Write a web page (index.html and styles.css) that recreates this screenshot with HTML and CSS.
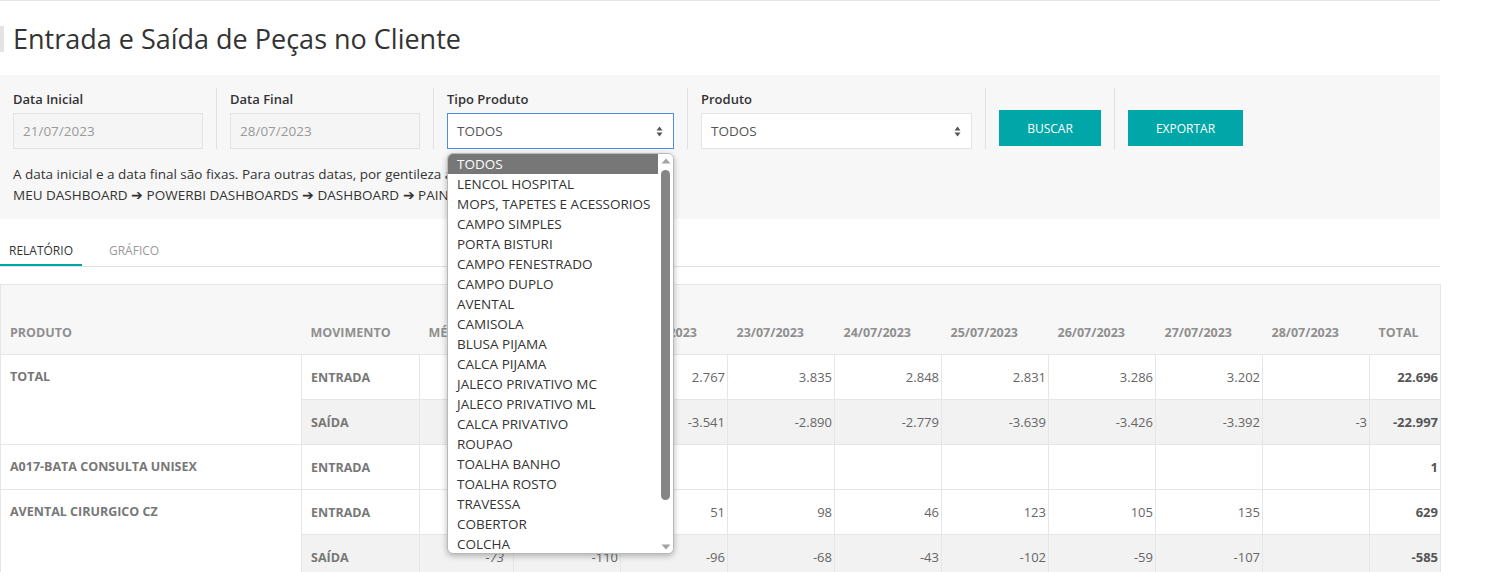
FILE: index.html
```html
<!DOCTYPE html>
<html lang="pt-BR">
<head>
<meta charset="utf-8">
<title>Entrada e Saída de Peças no Cliente</title>
<link rel="stylesheet" href="styles.css">
</head>
<body>
<div class="page">
  <h1 class="title">Entrada e Saída de Peças no Cliente</h1>

  <section class="filters">
    <div class="fields">
      <div class="field">
        <label class="label">Data Inicial</label>
        <div class="input input-date">21/07/2023</div>
      </div>
      <div class="field">
        <label class="label">Data Final</label>
        <div class="input input-date">28/07/2023</div>
      </div>
      <div class="field field-tipo">
        <label class="label">Tipo Produto</label>
        <div class="input select select-focus">
          <span>TODOS</span>
          <svg class="caret" width="7" height="11" viewBox="0 0 7 11"><path d="M3.5 0.5 L6.5 4.5 L0.5 4.5 Z M3.5 10.5 L6.5 6.5 L0.5 6.5 Z" fill="#555"/></svg>
        </div>
        <div class="dropdown">
          <ul class="options">
            <li class="opt selected">TODOS</li>
            <li class="opt">LENCOL HOSPITAL</li>
            <li class="opt">MOPS, TAPETES E ACESSORIOS</li>
            <li class="opt">CAMPO SIMPLES</li>
            <li class="opt">PORTA BISTURI</li>
            <li class="opt">CAMPO FENESTRADO</li>
            <li class="opt">CAMPO DUPLO</li>
            <li class="opt">AVENTAL</li>
            <li class="opt">CAMISOLA</li>
            <li class="opt">BLUSA PIJAMA</li>
            <li class="opt">CALCA PIJAMA</li>
            <li class="opt">JALECO PRIVATIVO MC</li>
            <li class="opt">JALECO PRIVATIVO ML</li>
            <li class="opt">CALCA PRIVATIVO</li>
            <li class="opt">ROUPAO</li>
            <li class="opt">TOALHA BANHO</li>
            <li class="opt">TOALHA ROSTO</li>
            <li class="opt">TRAVESSA</li>
            <li class="opt">COBERTOR</li>
            <li class="opt">COLCHA</li>
          </ul>
          <div class="scrollbar">
            <svg class="arrow" width="10" height="6" viewBox="0 0 10 6"><path d="M5 0.5 L9.5 5.5 L0.5 5.5 Z" fill="#a3a3a3"/></svg>
            <div class="track"><div class="thumb"></div></div>
            <svg class="arrow" width="10" height="6" viewBox="0 0 10 6"><path d="M5 5.5 L9.5 0.5 L0.5 0.5 Z" fill="#a3a3a3"/></svg>
          </div>
        </div>
      </div>
      <div class="field field-prod">
        <label class="label">Produto</label>
        <div class="input select">
          <span>TODOS</span>
          <svg class="caret" width="7" height="11" viewBox="0 0 7 11"><path d="M3.5 0.5 L6.5 4.5 L0.5 4.5 Z M3.5 10.5 L6.5 6.5 L0.5 6.5 Z" fill="#555"/></svg>
        </div>
      </div>
      <div class="field field-btn">
        <button class="btn btn-buscar">BUSCAR</button>
      </div>
      <div class="field field-btn">
        <button class="btn btn-exportar">EXPORTAR</button>
      </div>
    </div>
    <p class="note">A data inicial e a data final são fixas. Para outras datas, por gentileza acesse:<br>MEU DASHBOARD ➔ POWERBI DASHBOARDS ➔ DASHBOARD ➔ PAINEL</p>
  </section>

  <nav class="tabs">
    <a class="tab active">RELATÓRIO</a>
    <a class="tab">GRÁFICO</a>
  </nav>

  <table class="report">
    <colgroup>
      <col class="c-prod"><col class="c-mov"><col class="c-med">
      <col class="c-day"><col class="c-day"><col class="c-day"><col class="c-day">
      <col class="c-day"><col class="c-day"><col class="c-day"><col class="c-day">
      <col class="c-tot">
    </colgroup>
    <thead>
      <tr>
        <th>PRODUTO</th><th>MOVIMENTO</th><th>MÉDIA</th>
        <th>21/07/2023</th><th>22/07/2023</th><th>23/07/2023</th><th>24/07/2023</th>
        <th>25/07/2023</th><th>26/07/2023</th><th>27/07/2023</th><th>28/07/2023</th>
        <th>TOTAL</th>
      </tr>
    </thead>
    <tbody>
      <tr>
        <td class="prod" rowspan="2">TOTAL</td><td class="mov">ENTRADA</td>
        <td class="num med">3.242</td><td class="num">3.927</td><td class="num">2.767</td><td class="num">3.835</td><td class="num">2.848</td>
        <td class="num">2.831</td><td class="num">3.286</td><td class="num">3.202</td><td class="num"></td><td class="num tot">22.696</td>
      </tr>
      <tr class="out">
        <td class="mov">SAÍDA</td>
        <td class="num med">-2.875</td><td class="num">-3.327</td><td class="num">-3.541</td><td class="num">-2.890</td><td class="num">-2.779</td>
        <td class="num">-3.639</td><td class="num">-3.426</td><td class="num">-3.392</td><td class="num">-3</td><td class="num tot">-22.997</td>
      </tr>
      <tr>
        <td class="prod">A017-BATA CONSULTA UNISEX</td><td class="mov">ENTRADA</td>
        <td class="num med">1</td><td class="num">1</td><td class="num"></td><td class="num"></td><td class="num"></td>
        <td class="num"></td><td class="num"></td><td class="num"></td><td class="num"></td><td class="num tot">1</td>
      </tr>
      <tr>
        <td class="prod" rowspan="2">AVENTAL CIRURGICO CZ</td><td class="mov">ENTRADA</td>
        <td class="num med">90</td><td class="num">71</td><td class="num">51</td><td class="num">98</td><td class="num">46</td>
        <td class="num">123</td><td class="num">105</td><td class="num">135</td><td class="num"></td><td class="num tot">629</td>
      </tr>
      <tr class="out">
        <td class="mov">SAÍDA</td>
        <td class="num med">-73</td><td class="num">-110</td><td class="num">-96</td><td class="num">-68</td><td class="num">-43</td>
        <td class="num">-102</td><td class="num">-59</td><td class="num">-107</td><td class="num"></td><td class="num tot">-585</td>
      </tr>
    </tbody>
  </table>
</div>
</body>
</html>
```

FILE: styles.css
```css
html { overflow: hidden; }
body {
  margin: 0;
  font-family: "Open Sans", "Noto Sans", sans-serif;
  color: #333;
  background: #fff;
}
.page {
  width: 1440px;
  border-top: 1px solid #e6e6e6;
}
.title {
  margin: 25px 0 23px;
  padding-left: 9px;
  border-left: 4px solid #e3e3e3;
  font-size: 27px;
  font-weight: 400;
  line-height: 26px;
  color: #333;
}
.filters {
  background: #f7f7f7;
  padding: 13px 0 13px;
}
.fields {
  display: flex;
  align-items: stretch;
  padding-left: 13px;
}
.field {
  display: flex;
  flex-direction: column;
  padding-right: 13px;
  margin-right: 13px;
  border-right: 1px solid #e0e0e0;
}
.field:last-child { border-right: none; }
.field-tipo { position: relative; }
.label {
  font-size: 13px;
  font-weight: 600;
  line-height: 18px;
  height: 18px;
  padding-top: 2px;
  margin-bottom: 5px;
  color: #333;
}
.input {
  box-sizing: border-box;
  height: 36px;
  border: 1px solid #e3e3e3;
  font-size: 13.5px;
  line-height: 34px;
  padding: 0 9px;
}
.input-date {
  width: 190px;
  background: #f5f5f5;
  color: #999;
}
.select {
  display: flex;
  align-items: center;
  justify-content: space-between;
  background: #fff;
  color: #555;
}
.field-tipo .select { width: 227px; }
.field-prod .select { width: 271px; }
.select-focus { border-color: #4a8fe7; }
.caret { margin-right: 1px; }
.field-btn { justify-content: flex-start; padding-top: 22px; }
.btn {
  height: 36px;
  border: none;
  background: #00a6a8;
  color: #fff;
  font-family: inherit;
  font-size: 12px;
  padding: 0;
  cursor: pointer;
}
.btn-buscar { width: 102px; }
.btn-exportar { width: 115px; }
.note {
  margin: 15px 0 0 13px;
  font-size: 13.5px;
  line-height: 21px;
  color: #333;
}

.dropdown {
  position: absolute;
  left: 0;
  top: 65px;
  box-sizing: border-box;
  width: 227px;
  height: 401px;
  background: #fff;
  border: 1px solid #b8b8b8;
  border-radius: 6px;
  box-shadow: 0 2px 6px rgba(0,0,0,0.28);
  display: flex;
  overflow: hidden;
  z-index: 5;
}
.options {
  list-style: none;
  margin: 0;
  padding: 0;
  flex: 1;
}
.opt {
  height: 20px;
  line-height: 20px;
  padding-left: 9px;
  font-size: 13.5px;
  color: #333;
  white-space: nowrap;
}
.opt.selected { background: #777; color: #fff; }
.scrollbar {
  width: 15px;
  display: flex;
  flex-direction: column;
  align-items: center;
  background: #fff;
  padding: 4px 0 3px;
}
.arrow { flex: none; }
.track { flex: 1; width: 100%; display: flex; justify-content: center; padding-top: 6px; }
.thumb { width: 9px; height: 330px; background: #858585; border-radius: 5px; }

.tabs {
  display: flex;
  margin-top: 21px;
  border-bottom: 1px solid #e0e0e0;
  height: 26px;
}
.tab {
  font-size: 12px;
  line-height: 22px;
  padding: 0 9px;
  margin-right: 18px;
  color: #999;
}
.tab.active { color: #333; border-bottom: 2px solid #00a6a8; }

.report {
  margin-top: 17px;
  width: 1440px;
  table-layout: fixed;
  border-collapse: collapse;
  border: 1px solid #e6e6e6;
  font-size: 12.5px;
}
.c-prod { width: 301px; }
.c-mov { width: 118px; }
.c-med { width: 94px; }
.c-day { width: 107px; }
.c-tot { width: 71px; }
.report th {
  height: 56px;
  background: #f7f7f7;
  text-align: left;
  vertical-align: bottom;
  padding: 0 0 13px 9px;
  font-weight: 700;
  color: #8f8f8f;
  white-space: nowrap;
  overflow: hidden;
  border-bottom: 1px solid #e6e6e6;
}
.report td {
  height: 45px;
  box-sizing: border-box;
  border: 1px solid #e6e6e6;
  padding: 0 2px 0 9px;
  white-space: nowrap;
  vertical-align: middle;
}
.report td.prod {
  vertical-align: top;
  padding-top: 13px;
  font-weight: 700;
  color: #777;
  background: #fff;
}
.report td.mov { font-weight: 700; color: #777; }
.report td.num { text-align: right; color: #666; font-size: 13px; }
.report td.med { padding-right: 9px; font-style: italic; }
.report td.tot { font-weight: 700; color: #555; }
.report tr.out td { background: #f2f2f2; }
```
